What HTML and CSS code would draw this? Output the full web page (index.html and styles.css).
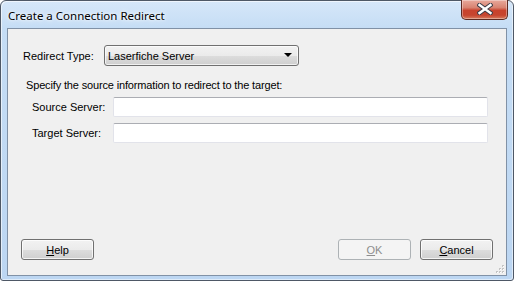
FILE: index.html
```html
<!DOCTYPE html>
<html>
<head>
<meta charset="utf-8">
<link rel="stylesheet" href="styles.css">
</head>
<body>
<div class="window">
  <div class="titlebar">
    <span class="title">Create a Connection Redirect</span>
  </div>
  <button class="close" aria-label="Close">
    <svg width="16" height="12" viewBox="0 0 16 12">
      <path d="M2.5 2 L13.5 10 M13.5 2 L2.5 10" stroke="#3c3c46" stroke-width="4.4" stroke-linecap="square" fill="none"/>
      <path d="M2.5 2 L13.5 10 M13.5 2 L2.5 10" stroke="#ffffff" stroke-width="2.4" stroke-linecap="square" fill="none"/>
    </svg>
  </button>
  <div class="client">
    <div class="type-row">
      <span class="type-label">Redirect Type:</span>
      <div class="combo">
        <span class="combo-text">Laserfiche Server</span>
        <span class="combo-arrow"></span>
      </div>
    </div>
    <div class="hint">Specify the source information to redirect to the target:</div>
    <div class="field-row">
      <span class="field-label">Source Server:</span>
      <div class="textbox"></div>
    </div>
    <div class="field-row">
      <span class="field-label">Target Server:</span>
      <div class="textbox"></div>
    </div>
    <div class="buttons">
      <button class="btn"><u>H</u>elp</button>
      <span class="spacer"></span>
      <button class="btn disabled"><u>O</u>K</button>
      <button class="btn"><u>C</u>ancel</button>
    </div>
    <svg class="grip" width="9" height="9" viewBox="0 0 9 9">
      <g fill="#c4c4c4">
        <rect x="6" y="0" width="2" height="2"/>
        <rect x="3" y="3" width="2" height="2"/>
        <rect x="6" y="3" width="2" height="2"/>
        <rect x="0" y="6" width="2" height="2"/>
        <rect x="3" y="6" width="2" height="2"/>
        <rect x="6" y="6" width="2" height="2"/>
      </g>
      <g fill="#ffffff">
        <rect x="7" y="1" width="1" height="1"/>
        <rect x="4" y="4" width="1" height="1"/>
        <rect x="7" y="4" width="1" height="1"/>
        <rect x="1" y="7" width="1" height="1"/>
        <rect x="4" y="7" width="1" height="1"/>
        <rect x="7" y="7" width="1" height="1"/>
      </g>
    </svg>
  </div>
</div>
</body>
</html>
```

FILE: styles.css
```css
* { box-sizing: border-box; }
html, body { margin: 0; padding: 0; background: #ffffff; }
body {
  font-family: "Liberation Sans", Arial, sans-serif;
  font-size: 11px;
  color: #000;
}
.window {
  position: relative;
  width: 514px;
  height: 281px;
  border: 1px solid #4e5866;
  border-radius: 6px 6px 3px 3px;
  background: linear-gradient(to bottom, #d6e7f9 0px, #c5ddf5 27px, #bcd6f2 100%);
  box-shadow: inset 1px 1px 0 rgba(255,255,255,0.6), inset -1px -1px 0 rgba(255,255,255,0.5);
  padding: 0 6px 4px 6px;
  display: flex;
  flex-direction: column;
}
.titlebar {
  height: 27px;
  display: flex;
  align-items: center;
  padding-left: 1px;
  padding-top: 2px;
}
.title {
  font-family: "Noto Sans", "Open Sans", sans-serif;
  font-size: 11.5px;
  color: #000;
  text-shadow: 0 0 6px #ffffff, 0 0 3px #ffffff;
}
.close {
  position: absolute;
  top: -1px;
  right: 5px;
  width: 47px;
  height: 20px;
  padding: 0;
  border: 1px solid #5d2a22;
  border-top: none;
  border-radius: 0 0 5px 5px;
  background: linear-gradient(to bottom, #e8a99c 0%, #d88371 40%, #c8422d 55%, #c7452f 80%, #d77c5e 100%);
  box-shadow: inset 0 0 0 1px rgba(255,255,255,0.35);
  display: flex;
  align-items: center;
  justify-content: center;
}
.close svg { display: block; margin-top: -1px; }
.client {
  position: relative;
  flex: 1;
  border: 1px solid #8091a6;
  background: #f0f0f0;
  padding: 16px 13px 15px 13px;
  display: flex;
  flex-direction: column;
}
.type-row {
  display: flex;
  align-items: center;
  padding-left: 2px;
}
.type-label { width: 81px; }
.combo {
  position: relative;
  width: 195px;
  height: 21px;
  border: 1px solid #707070;
  border-radius: 3px;
  background: linear-gradient(to bottom, #f2f2f2 0%, #ebebeb 50%, #dddddd 51%, #cfcfcf 100%);
  box-shadow: inset 0 0 0 1px rgba(255,255,255,0.7);
  display: flex;
  align-items: center;
  padding-left: 3px;
}
.combo-arrow {
  position: absolute;
  right: 6px;
  top: 7px;
  width: 0;
  height: 0;
  border-left: 4px solid transparent;
  border-right: 4px solid transparent;
  border-top: 4px solid #000;
}
.hint {
  margin-top: 13px;
  padding-left: 5px;
  line-height: 13px;
  letter-spacing: -0.15px;
}
.field-row {
  display: flex;
  align-items: center;
  padding-left: 11px;
  margin-top: 5px;
}
.field-row + .field-row { margin-top: 6px; }
.field-label { width: 81px; }
.textbox {
  width: 375px;
  height: 20px;
  background: #ffffff;
  border: 1px solid #e2e3ea;
  border-top-color: #abadb3;
  border-radius: 2px;
}
.buttons {
  margin-top: auto;
  display: flex;
  gap: 9px;
}
.spacer { flex: 1; }
.btn {
  width: 73px;
  height: 21px;
  padding: 0;
  font-family: "Liberation Sans", Arial, sans-serif;
  font-size: 11px;
  color: #000;
  border: 1px solid #707070;
  border-radius: 3px;
  background: linear-gradient(to bottom, #f2f2f2 0%, #ebebeb 50%, #dddddd 51%, #cfcfcf 100%);
  box-shadow: inset 0 0 0 1px rgba(255,255,255,0.75);
}
.btn.disabled {
  color: #8d8d8d;
  border-color: #adb2b5;
  background: #f4f4f4;
  box-shadow: none;
}
.grip {
  position: absolute;
  right: 1px;
  bottom: 1px;
}
```
